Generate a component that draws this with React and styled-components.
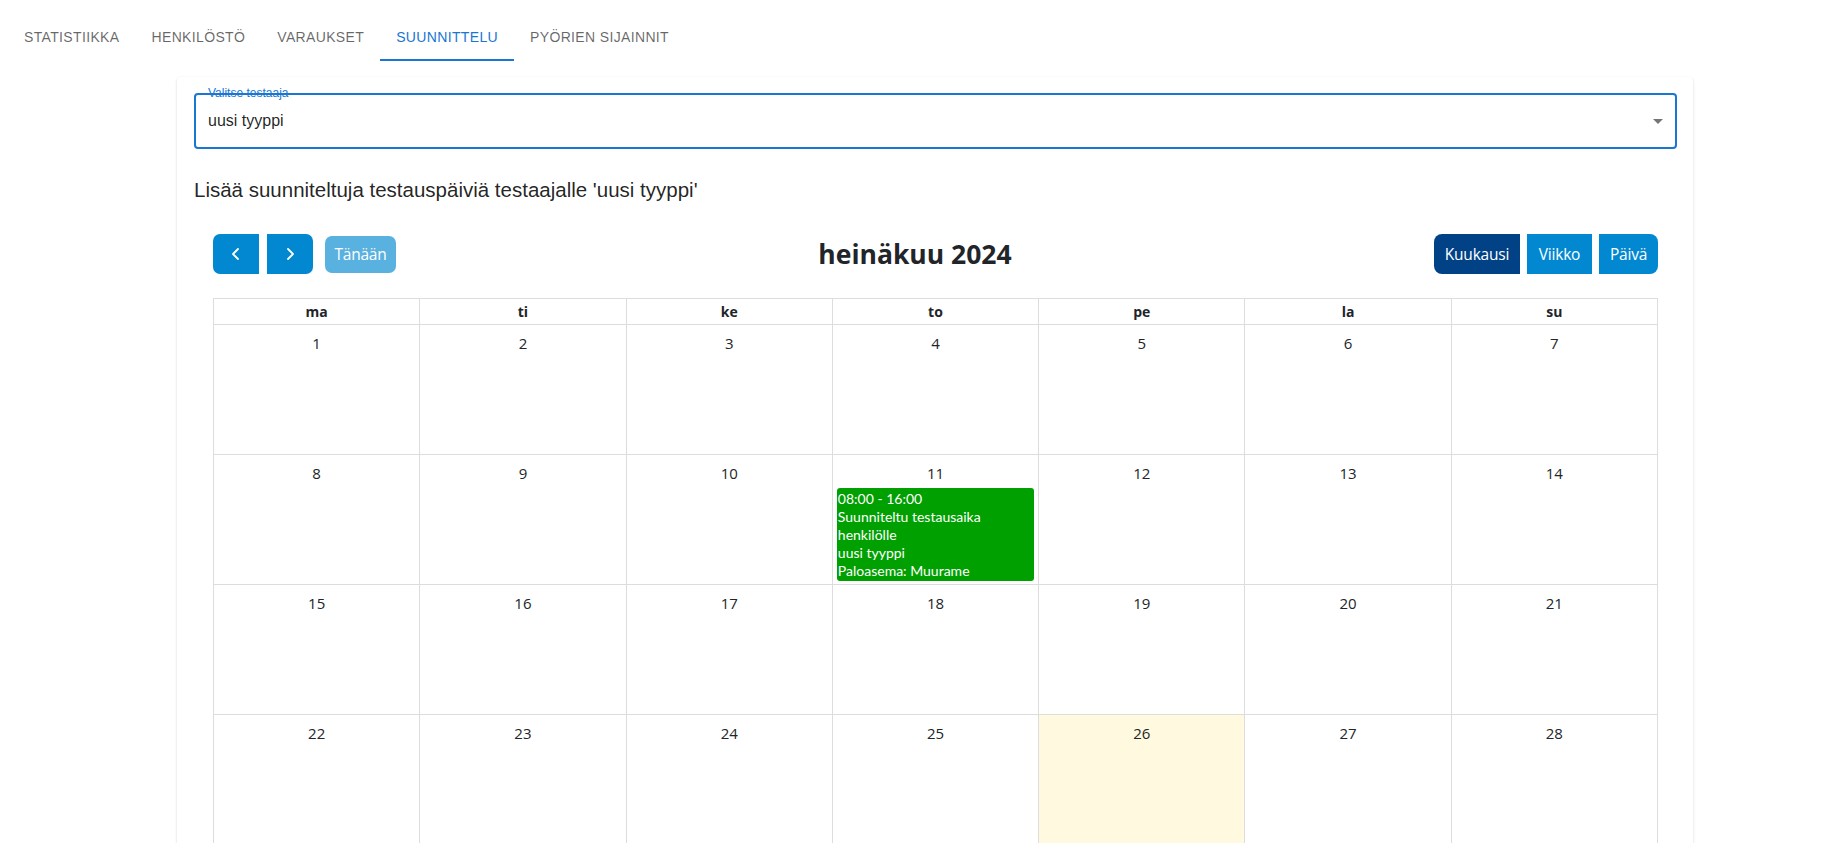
import React from 'react';
import styled, { createGlobalStyle, css } from 'styled-components';

const GlobalStyle = createGlobalStyle`
  body {
    margin: 0;
    background: #fff;
    font-family: "Liberation Sans", Arial, sans-serif;
  }
`;

const TabBar = styled.div`
  display: flex;
  padding: 13px 8px 0;
`;

const Tab = styled.div`
  min-height: 48px;
  box-sizing: border-box;
  padding: 12px 16px;
  display: flex;
  align-items: center;
  font-family: "Liberation Sans", Arial, sans-serif;
  font-size: 14px;
  letter-spacing: 0.35px;
  text-transform: uppercase;
  color: rgba(0, 0, 0, 0.6);
  ${(p) =>
    p.$active &&
    css`
      color: #1976d2;
      box-shadow: inset 0 -2px 0 #1976d2;
    `}
`;

const Card = styled.div`
  margin: 16px 0 0 177px;
  width: 1516px;
  box-sizing: border-box;
  padding: 16px;
  background: #fff;
  border-radius: 4px;
  box-shadow: 0px 2px 1px -1px rgba(0, 0, 0, 0.2), 0px 1px 1px 0px rgba(0, 0, 0, 0.14),
    0px 1px 3px 0px rgba(0, 0, 0, 0.12);
`;

const Field = styled.div`
  position: relative;
  margin-left: 1px;
  height: 56px;
  box-sizing: border-box;
  border: 2px solid #1976d2;
  border-radius: 4px;
  display: flex;
  align-items: center;
  padding: 0 5px 0 12px;
  font-size: 16px;
  color: rgba(0, 0, 0, 0.87);
`;

const FieldLabel = styled.span`
  position: absolute;
  left: 12px;
  top: -9px;
  font-size: 12px;
  line-height: 14px;
  color: #1976d2;
`;

const FieldValue = styled.span`
  flex: 1;
`;

const Heading = styled.h2`
  margin: 25px 0 0 1px;
  font-size: 20.5px;
  font-weight: 400;
  line-height: 32px;
  color: rgba(0, 0, 0, 0.87);
`;

const Calendar = styled.div`
  padding: 28px 19px 0 20px;
  font-family: "Open Sans", "Noto Sans", sans-serif;
  color: #212529;
`;

const Toolbar = styled.div`
  display: flex;
  justify-content: space-between;
  align-items: center;
  margin-bottom: 24px;
`;

const ButtonGroup = styled.div`
  display: flex;
  gap: ${(p) => p.$gap || '7px'};
  align-items: center;
`;

const CalButton = styled.button`
  width: ${(p) => p.$w}px;
  height: ${(p) => (p.$disabled ? 37 : 40)}px;
  border: none;
  padding: 0;
  font-family: "Open Sans", "Noto Sans", sans-serif;
  font-size: 15.5px;
  letter-spacing: -0.2px;
  color: #fff;
  background: ${(p) => (p.$active ? '#014286' : '#0288d1')};
  opacity: ${(p) => (p.$disabled ? 0.65 : 1)};
  border-radius: ${(p) => p.$radius || '0'};
  display: flex;
  align-items: center;
  justify-content: center;
  cursor: pointer;
`;

const Title = styled.h2`
  margin: 0;
  font-size: 26.5px;
  font-weight: 700;
  color: #212529;
`;

const Grid = styled.div`
  display: grid;
  grid-template-columns: repeat(7, 1fr);
  border-left: 1px solid #ddd;
  border-top: 1px solid #ddd;
`;

const HeadCell = styled.div`
  height: 25px;
  border-right: 1px solid #ddd;
  border-bottom: 1px solid #ddd;
  display: flex;
  align-items: center;
  justify-content: center;
  font-size: 14px;
  font-weight: 700;
`;

const DayCell = styled.div`
  height: 129px;
  border-right: 1px solid #ddd;
  border-bottom: 1px solid #ddd;
  background: ${(p) => (p.$today ? 'rgba(255, 220, 40, 0.15)' : 'transparent')};
  display: flex;
  flex-direction: column;
`;

const DayNumber = styled.div`
  padding-top: 6px;
  height: 24px;
  line-height: 24px;
  text-align: center;
  font-size: 15px;
  color: ${(p) => (p.$other ? '#999' : '#212529')};
  margin-bottom: 3px;
`;

const Event = styled.div`
  margin: 0 4px;
  padding: 2px 1px 1px;
  background: #00a000;
  border-radius: 3px;
  color: #fff;
  font-family: Lato, "Open Sans", sans-serif;
  font-size: 14px;
  line-height: 18px;
`;

const Chevron = ({ dir }) => (
  <svg width="12" height="16" viewBox="0 0 12 16">
    <polyline
      points={dir === 'left' ? '8,3 3,8 8,13' : '4,3 9,8 4,13'}
      fill="none"
      stroke="#fff"
      strokeWidth="1.8"
      strokeLinecap="round"
      strokeLinejoin="round"
    />
  </svg>
);

const days = ['ma', 'ti', 'ke', 'to', 'pe', 'la', 'su'];

const weeks = [];
for (let w = 0; w < 5; w++) {
  const row = [];
  for (let d = 0; d < 7; d++) {
    const n = w * 7 + d + 1;
    row.push(n <= 31 ? { n, other: false } : { n: n - 31, other: true });
  }
  weeks.push(row);
}

export default function App() {
  return (
    <>
      <GlobalStyle />
      <TabBar>
        <Tab>Statistiikka</Tab>
        <Tab>Henkilöstö</Tab>
        <Tab>Varaukset</Tab>
        <Tab $active>Suunnittelu</Tab>
        <Tab>Pyörien sijainnit</Tab>
      </TabBar>
      <Card>
        <Field>
          <FieldLabel>Valitse testaaja</FieldLabel>
          <FieldValue>uusi tyyppi</FieldValue>
          <svg width="24" height="24" viewBox="0 0 24 24">
            <path d="M7 10l5 5 5-5z" fill="rgba(0,0,0,0.54)" />
          </svg>
        </Field>
        <Heading>Lisää suunniteltuja testauspäiviä testaajalle 'uusi tyyppi'</Heading>
        <Calendar>
          <Toolbar>
            <ButtonGroup $gap="8px">
              <CalButton $w={46} $radius="7px 0 0 7px">
                <Chevron dir="left" />
              </CalButton>
              <CalButton $w={46} $radius="0 7px 7px 0">
                <Chevron dir="right" />
              </CalButton>
              <CalButton $w={71} $disabled $radius="7px" style={{ marginLeft: 4 }}>
                Tänään
              </CalButton>
            </ButtonGroup>
            <Title>heinäkuu 2024</Title>
            <ButtonGroup>
              <CalButton $w={86} $active $radius="8px 0 0 8px">Kuukausi</CalButton>
              <CalButton $w={65}>Viikko</CalButton>
              <CalButton $w={59} $radius="0 8px 8px 0">Päivä</CalButton>
            </ButtonGroup>
          </Toolbar>
          <Grid>
            {days.map((d) => (
              <HeadCell key={d}>{d}</HeadCell>
            ))}
            {weeks.flat().map((c, i) => (
              <DayCell key={i} $today={!c.other && c.n === 26}>
                <DayNumber $other={c.other}>{c.n}</DayNumber>
                {!c.other && c.n === 11 && (
                  <Event>
                    08:00 - 16:00
                    <br />
                    Suunniteltu testausaika
                    <br />
                    henkilölle
                    <br />
                    uusi tyyppi
                    <br />
                    Paloasema: Muurame
                  </Event>
                )}
              </DayCell>
            ))}
          </Grid>
        </Calendar>
      </Card>
    </>
  );
}
